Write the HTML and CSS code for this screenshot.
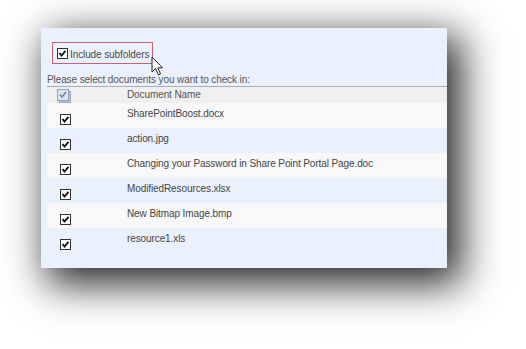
FILE: index.html
```html
<!DOCTYPE html>
<html lang="en">
<head>
    <meta charset="UTF-8">
    <title>Check In Documents</title>
    <link rel="stylesheet" href="styles.css">
</head>
<body>
<div class="panel">
    <!-- include subfolders option, highlighted -->
    <div class="subfolders">
        <svg class="check" width="11" height="11" viewBox="0 0 11 11"><rect x="0.5" y="0.5" width="10" height="10" fill="#fff" stroke="#333"/><path d="M2.5 5 L4.5 7.5 L8.5 2.8" fill="none" stroke="#111" stroke-width="1.8"/></svg>
        <span>Include subfolders</span>
        <svg class="cursor" width="13" height="20" viewBox="0 0 13 20"><path d="M1 1 L1 16 L4.5 12.5 L7.5 19 L9.5 18 L6.8 11.8 L11.5 11.8 Z" fill="#fff" stroke="#222" stroke-width="1"/></svg>
    </div>

    <div class="prompt">Please select documents you want to check in:</div>

    <div class="docTable">
        <div class="headRow">
            <div class="checkCol">
                <svg width="14" height="14" viewBox="0 0 14 14"><rect x="2.5" y="2.5" width="11" height="11" fill="#b9c6da" stroke="#9aaac4"/><rect x="0.5" y="0.5" width="11" height="11" fill="#dde5f1" stroke="#8ea0bd"/><path d="M3 5.5 L5 8 L9 3" fill="none" stroke="#6f82a3" stroke-width="1.5"/></svg>
            </div>
            <div class="nameCol">Document Name</div>
        </div>

        <div class="docRow">
            <div class="checkCol"><svg width="11" height="11" viewBox="0 0 11 11"><rect x="0.5" y="0.5" width="10" height="10" fill="#fff" stroke="#333"/><path d="M2.5 5 L4.5 7.5 L8.5 2.8" fill="none" stroke="#111" stroke-width="1.8"/></svg></div>
            <div class="nameCol">SharePointBoost.docx</div>
        </div>
        <div class="docRow alt">
            <div class="checkCol"><svg width="11" height="11" viewBox="0 0 11 11"><rect x="0.5" y="0.5" width="10" height="10" fill="#fff" stroke="#333"/><path d="M2.5 5 L4.5 7.5 L8.5 2.8" fill="none" stroke="#111" stroke-width="1.8"/></svg></div>
            <div class="nameCol">action.jpg</div>
        </div>
        <div class="docRow">
            <div class="checkCol"><svg width="11" height="11" viewBox="0 0 11 11"><rect x="0.5" y="0.5" width="10" height="10" fill="#fff" stroke="#333"/><path d="M2.5 5 L4.5 7.5 L8.5 2.8" fill="none" stroke="#111" stroke-width="1.8"/></svg></div>
            <div class="nameCol">Changing your Password in Share Point Portal Page.doc</div>
        </div>
        <div class="docRow alt">
            <div class="checkCol"><svg width="11" height="11" viewBox="0 0 11 11"><rect x="0.5" y="0.5" width="10" height="10" fill="#fff" stroke="#333"/><path d="M2.5 5 L4.5 7.5 L8.5 2.8" fill="none" stroke="#111" stroke-width="1.8"/></svg></div>
            <div class="nameCol">ModifiedResources.xlsx</div>
        </div>
        <div class="docRow">
            <div class="checkCol"><svg width="11" height="11" viewBox="0 0 11 11"><rect x="0.5" y="0.5" width="10" height="10" fill="#fff" stroke="#333"/><path d="M2.5 5 L4.5 7.5 L8.5 2.8" fill="none" stroke="#111" stroke-width="1.8"/></svg></div>
            <div class="nameCol">New Bitmap Image.bmp</div>
        </div>
        <div class="docRow alt">
            <div class="checkCol"><svg width="11" height="11" viewBox="0 0 11 11"><rect x="0.5" y="0.5" width="10" height="10" fill="#fff" stroke="#333"/><path d="M2.5 5 L4.5 7.5 L8.5 2.8" fill="none" stroke="#111" stroke-width="1.8"/></svg></div>
            <div class="nameCol">resource1.xls</div>
        </div>
    </div>
</div>
</body>
</html>
```

FILE: styles.css
```css
html {
    background-color: #ffffff;
}

body {
    margin: 0;
    padding: 28px 0 0 41px;
    height: 349px;
    box-sizing: border-box;
    font-family: "Liberation Sans", Arial, sans-serif;
    font-size: 10px;
    letter-spacing: -0.1px;
    color: #444;
}

.panel {
    width: 406px;
    height: 240px;
    box-sizing: border-box;
    padding-top: 14px;
    background-color: #eaf1fc;
    box-shadow: 10px 12px 38px 4px rgba(0, 0, 0, 0.85);
}

/* highlighted option */
.subfolders {
    position: relative;
    display: flex;
    align-items: center;
    margin-left: 11px;
    width: 101px;
    height: 22px;
    box-sizing: border-box;
    border: 1px solid #d0606c;
    padding-left: 4px;
    white-space: nowrap;
}

.subfolders span {
    margin-left: 2px;
    line-height: 13px;
    padding-top: 2px;
    color: #4a4a4a;
}

.cursor {
    position: absolute;
    left: 98px;
    top: 13px;
}

.prompt {
    margin: 9px 0 0 6px;
    line-height: 13px;
    color: #555;
    white-space: nowrap;
}

.docTable {
    margin-left: 6px;
    border-top: 1px solid #a7b0ba;
}

.headRow {
    display: flex;
    height: 16px;
    background-color: #f0f0f0;
}

.headRow .checkCol {
    padding: 2px 0 0 10px;
}

.headRow .nameCol {
    padding-top: 0;
    line-height: 16px;
    color: #555;
}

.docRow {
    display: flex;
    height: 25px;
    background-color: #f8f8f8;
}

.docRow.alt {
    background-color: #eaf1fc;
}

.checkCol {
    width: 80px;
    flex-shrink: 0;
    box-sizing: border-box;
    padding: 11px 0 0 13px;
}

.checkCol svg {
    display: block;
}

.nameCol {
    padding-top: 4px;
    line-height: 13px;
    color: #454545;
    white-space: nowrap;
}
```
